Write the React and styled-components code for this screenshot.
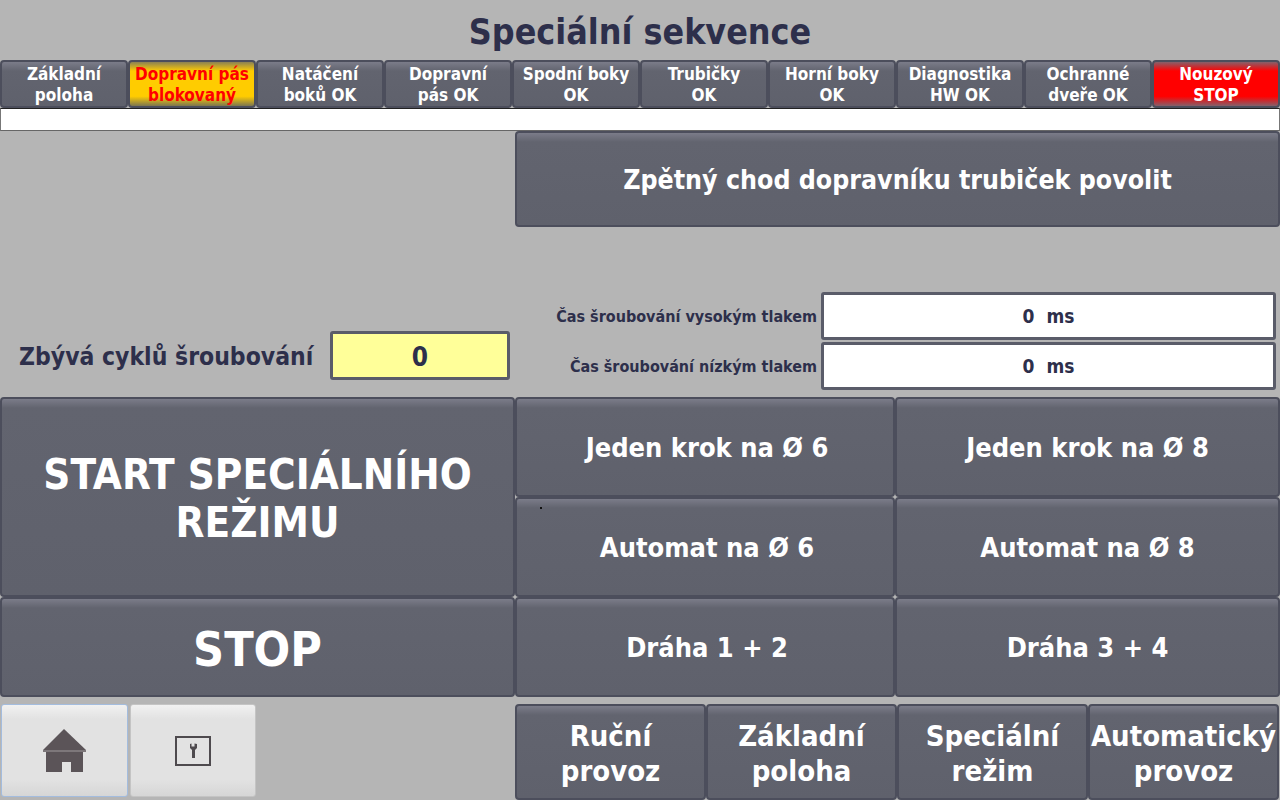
import React from "react";
import styled, { createGlobalStyle } from "styled-components";

const Global = createGlobalStyle`
  html, body { margin: 0; padding: 0; background: #b5b5b5; }
  body { font-family: "DejaVu Sans Condensed", "DejaVu Sans", "Liberation Sans", sans-serif; font-stretch: condensed; }
`;

const Page = styled.div`
  width: 1280px;
  height: 800px;
  overflow: hidden;
  background: #b5b5b5;
  display: flex;
  flex-direction: column;
  font-weight: 700;
`;

const Title = styled.h1`
  margin: 0;
  height: 60px;
  display: flex;
  align-items: center;
  justify-content: center;
  padding-top: 2px;
  box-sizing: border-box;
  font-size: 35.5px;
  font-weight: 700;
  color: #2d2f4b;
`;

const StatusRow = styled.div`
  display: grid;
  grid-template-columns: repeat(10, 128px);
  height: 48px;
`;

const faces = {
  normal: "linear-gradient(#7b7c89 0, #62646f 9px, #5f616c 100%)",
  warn: "linear-gradient(#8c8254 0, #ffcc00 9px, #ffcc00 78%, #7c7650 100%)",
  alarm: "linear-gradient(#86606a 0, #ff0000 9px, #ff0000 78%, #84606a 100%)",
};

const Key = styled.button`
  box-sizing: border-box;
  padding: ${(p) => p.$pt ?? 1}px 0 0 ${(p) => p.$pl ?? 0}px;
  margin: 0;
  border: 2px solid #4c4e5c;
  border-radius: 4px;
  background: ${(p) => faces[p.$tone || "normal"]};
  color: ${(p) => (p.$tone === "warn" ? "#ff0000" : "#ffffff")};
  font-family: inherit;
  font-stretch: inherit;
  font-weight: 700;
  text-align: center;
  display: flex;
  align-items: center;
  justify-content: center;
  font-size: ${(p) => p.$size || 27}px;
  line-height: ${(p) => p.$lh || 1.25};
  white-space: pre-line;
`;

const StatusKey = styled(Key)`
  font-size: 17px;
  line-height: 21px;
`;

const Strip = styled.div`
  box-sizing: border-box;
  height: 23px;
  background: #fff;
  border-top: 1px solid #222;
  border-bottom: 1px solid #666;
  border-left: 1px solid #777;
  border-right: 1px solid #777;
`;

const Upper = styled.div`
  display: grid;
  grid-template-columns: 515px 765px;
  height: 266px;
`;

const Counter = styled.div`
  display: flex;
  align-items: flex-end;
  justify-content: space-between;
  padding: 0 5px 17px 19px;
`;

const CounterLabel = styled.span`
  color: #2d2f4b;
  font-size: 24.5px;
  line-height: 46px;
`;

const Field = styled.div`
  box-sizing: border-box;
  border: 3px solid #5a5c69;
  border-radius: 3px;
  background: ${(p) => p.$bg || "#fff"};
  color: #2d2f4b;
  display: flex;
  align-items: center;
  justify-content: center;
  white-space: pre;
`;

const CounterField = styled(Field)`
  width: 180px;
  height: 49px;
  padding-top: 3px;
  font-size: 26px;
`;

const UpperRight = styled.div`
  display: flex;
  flex-direction: column;
`;

const WideKey = styled(Key)`
  height: 96px;
  flex: none;
  font-size: 26.5px;
`;

const Params = styled.div`
  margin-top: 65px;
  display: flex;
  flex-direction: column;
  gap: 2px;
`;

const ParamRow = styled.div`
  display: grid;
  grid-template-columns: 306px 455px;
  height: 48px;
  align-items: center;
`;

const ParamLabel = styled.span`
  color: #2d2f4b;
  font-size: 16px;
  text-align: right;
  padding-right: 4px;
`;

const ParamField = styled(Field)`
  height: 48px;
  font-size: 19px;
`;

const Controls = styled.div`
  display: grid;
  grid-template-columns: 515px 380px 385px;
  grid-template-rows: repeat(3, 100px);
`;

const StartKey = styled(Key)`
  grid-row: span 2;
`;

const Footer = styled.div`
  margin-top: 7px;
  display: grid;
  grid-template-columns: 515px 1fr;
  height: 96px;
`;

const Tools = styled.div`
  display: flex;
  gap: 2px;
  padding-left: 1px;
`;

const ToolKey = styled.button`
  box-sizing: border-box;
  width: 126.5px;
  height: 93px;
  padding: 0;
  display: flex;
  align-items: center;
  justify-content: center;
  border-radius: 3px;
  border: 1px solid ${(p) => (p.$focus ? "#a3bcde" : "#c4c4c4")};
  background: linear-gradient(#f1f1f1 0, #e2e2e2 14px, #e2e2e2 82%, #d6d6d6 100%);
`;

const Modes = styled.div`
  display: grid;
  grid-template-columns: repeat(4, 191px);
`;

const Mark = styled.span`
  position: absolute;
  left: 540px;
  top: 507px;
  width: 2px;
  height: 2px;
  background: #111;
`;

const HomeIcon = () => (
  <svg width="44" height="44" viewBox="0 0 44 44" aria-hidden="true">
    <path fill="#5b5458" d="M22 0 L44 21 H1 Z" />
    <rect x="1" y="21" width="43" height="2" fill="#7d777a" />
    <path fill="#5b5458" d="M4 23 H41 V43 H29 V33 H20 V43 H4 Z" />
  </svg>
);

const WrenchIcon = () => (
  <svg width="36" height="30" viewBox="0 0 36 30" aria-hidden="true">
    <rect x="1" y="1" width="34" height="28" fill="none" stroke="#4e4a4e" strokeWidth="2" />
    <path fill="#4e4a4e" d="M17 22 V14 L15 12 V8 L16.5 7.5 V10.5 H19.5 V7.5 L22 8 V12 L20 14 V22 Z" />
  </svg>
);

const statuses = [
  ["Základní\npoloha"],
  ["Dopravní pás\nblokovaný", "warn"],
  ["Natáčení\nboků OK"],
  ["Dopravní\npás OK"],
  ["Spodní boky\nOK"],
  ["Trubičky\nOK"],
  ["Horní boky\nOK"],
  ["Diagnostika\nHW OK"],
  ["Ochranné\ndveře OK"],
  ["Nouzový\nSTOP", "alarm"],
];

const modes = ["Ruční\nprovoz", "Základní\npoloha", "Speciální\nrežim", "Automatický\nprovoz"];

export default function App() {
  return (
    <Page>
      <Global />
      <Title>Speciální sekvence</Title>
      <StatusRow>
        {statuses.map(([label, tone]) => (
          <StatusKey key={label} $tone={tone}>{label}</StatusKey>
        ))}
      </StatusRow>
      <Strip />
      <Upper>
        <Counter>
          <CounterLabel>Zbývá cyklů šroubování</CounterLabel>
          <CounterField $bg="#ffff99">0</CounterField>
        </Counter>
        <UpperRight>
          <WideKey>Zpětný chod dopravníku trubiček povolit</WideKey>
          <Params>
            <ParamRow>
              <ParamLabel>Čas šroubování vysokým tlakem</ParamLabel>
              <ParamField>0  ms</ParamField>
            </ParamRow>
            <ParamRow>
              <ParamLabel>Čas šroubování nízkým tlakem</ParamLabel>
              <ParamField>0  ms</ParamField>
            </ParamRow>
          </Params>
        </UpperRight>
      </Upper>
      <Controls>
        <StartKey $size={41.8} $lh={1.15} $pt={4}>{"START SPECIÁLNÍHO\nREŽIMU"}</StartKey>
        <Key $pl={4}>Jeden krok na Ø 6</Key>
        <Key>Jeden krok na Ø 8</Key>
        <Key $pl={4}>Automat na Ø 6</Key>
        <Key>Automat na Ø 8</Key>
        <Key $size={48} $pt={4}>STOP</Key>
        <Key $pl={4}>Dráha 1 + 2</Key>
        <Key>Dráha 3 + 4</Key>
      </Controls>
      <Mark />
      <Footer>
        <Tools>
          <ToolKey $focus><HomeIcon /></ToolKey>
          <ToolKey><WrenchIcon /></ToolKey>
        </Tools>
        <Modes>
          {modes.map((m) => (
            <Key key={m} $size={29} $lh={1.2} $pt={4}>{m}</Key>
          ))}
        </Modes>
      </Footer>
    </Page>
  );
}
